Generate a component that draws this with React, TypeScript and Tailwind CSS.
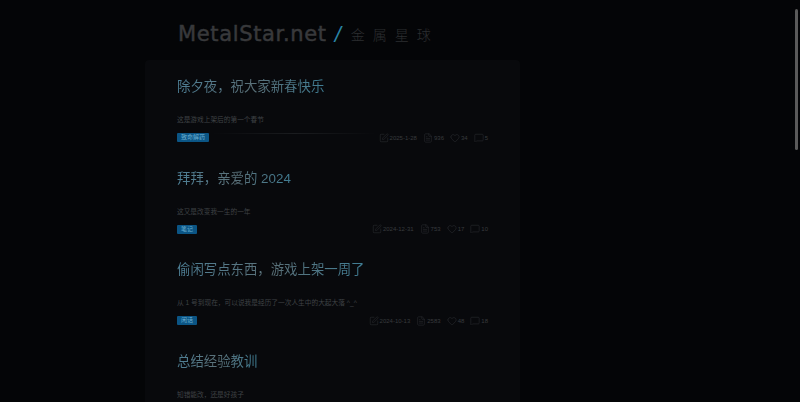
import { FileText, Heart, MessageSquare, SquarePen } from 'lucide-react';

type Post = {
  title: string;
  excerpt: string;
  tag?: string;
  date?: string;
  views?: string;
  likes?: string;
  comments?: string;
  rule?: boolean;
};

const posts: Post[] = [
  { title: '除夕夜，祝大家新春快乐', excerpt: '这是游戏上架后的第一个春节', tag: '致命解药', date: '2025-1-28', views: '936', likes: '34', comments: '5', rule: true },
  { title: '拜拜，亲爱的 2024', excerpt: '这又是改变我一生的一年', tag: '笔记', date: '2024-12-31', views: '753', likes: '17', comments: '10' },
  { title: '偷闲写点东西，游戏上架一周了', excerpt: '从 1 号到现在，可以说我是经历了一次人生中的大起大落 ^_^', tag: '闲话', date: '2024-10-13', views: '2583', likes: '48', comments: '18' },
  { title: '总结经验教训', excerpt: '知错能改，还是好孩子' },
];

function Meta({ post }: { post: Post }) {
  return (
    <div className="flex items-center gap-[6px] text-[6px] leading-none text-[#383b3e]">
      <span className="flex items-center gap-[1px]"><SquarePen size={10} strokeWidth={1} />{post.date}</span>
      <span className="flex items-center gap-[1px]"><FileText size={10} strokeWidth={1} />{post.views}</span>
      <span className="flex items-center gap-[1px]"><Heart size={10} strokeWidth={1} />{post.likes}</span>
      <span className="flex items-center gap-[1px]"><MessageSquare size={10} strokeWidth={1} />{post.comments}</span>
    </div>
  );
}

export default function App() {
  return (
    <div className="relative h-[402px] overflow-hidden bg-[#040507] font-['Liberation_Sans','Noto_Sans_CJK_SC',sans-serif]">
      <div className="ml-[145px] w-[375px]">
        <header className="flex h-[60px] items-center pl-[33px] pt-[9px]">
          <span className="font-['DejaVu_Sans',sans-serif] text-[21px] leading-none tracking-[0.65px] text-[#38393b] [-webkit-text-stroke:0.5px_#38393b]">MetalStar.net</span>
          <span className="ml-[8px] text-[22px] italic leading-none text-[#2a84a6]">/</span>
          <span className="ml-[10px] text-[14px] font-light leading-none tracking-[8px] text-[#2c2e30]">金属星球</span>
        </header>
        <main className="rounded-[4px] bg-[#08090c] px-[32px] pt-[17px]">
          {posts.map((post) => (
            <article key={post.title} className="h-[91.6px]">
              <h2 className="h-[20px] w-fit bg-gradient-to-r from-[#4d7f96] via-[#5a7078] to-[#3f7d94] bg-clip-text text-[13.4px] font-normal leading-[20px] text-transparent">
                {post.title}
              </h2>
              <p className="mt-[18px] h-[10px] text-[6.7px] leading-[10px] text-[#3f4245]">{post.excerpt}</p>
              {post.tag && (
                <div className="mt-[8px] flex h-[9px] items-center">
                  <span className="rounded-[1px] bg-[#0b5585] px-[4px] text-[6px] leading-[9px] text-[#6aaed0]">{post.tag}</span>
                  <div className="ml-[4px] mr-[3px] h-full flex-1">
                    {post.rule && <div className="h-px bg-gradient-to-r from-transparent via-[#1a1c1f] to-transparent" />}
                  </div>
                  <Meta post={post} />
                </div>
              )}
            </article>
          ))}
        </main>
      </div>
      <div className="absolute right-[2px] top-[9px] h-[141px] w-[3px] rounded-full bg-[#5a5a5a]" />
    </div>
  );
}
